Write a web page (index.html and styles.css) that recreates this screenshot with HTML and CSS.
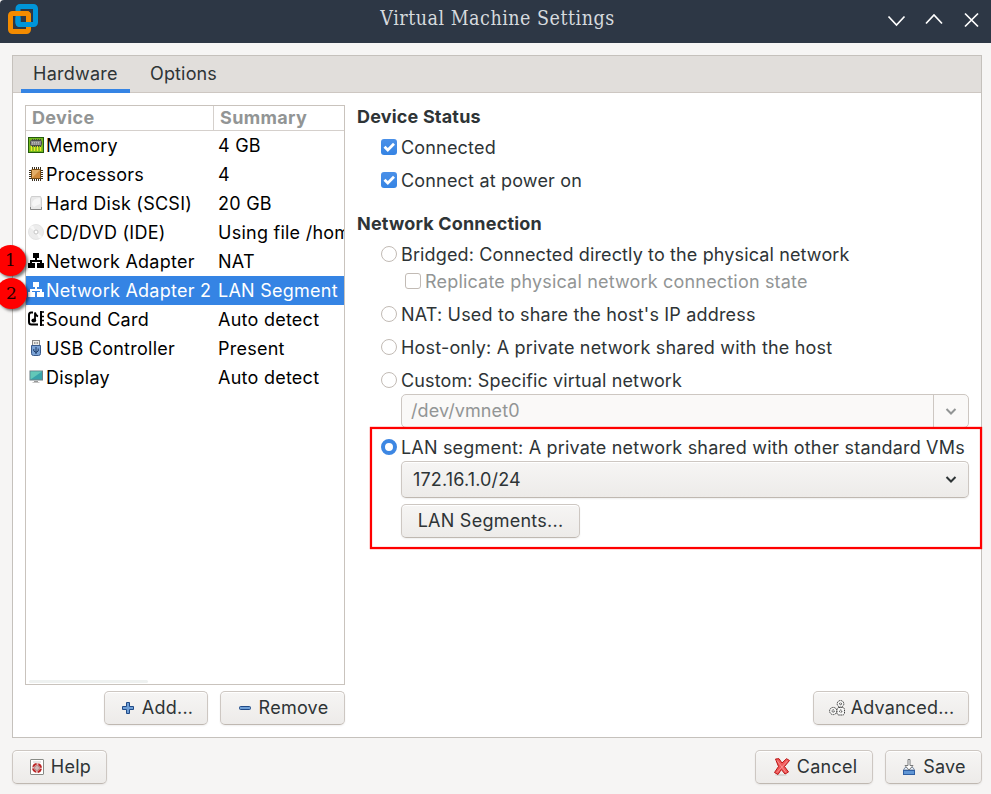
FILE: index.html
```html
<!DOCTYPE html>
<html lang="en">
<head>
<meta charset="utf-8">
<title>Virtual Machine Settings</title>
<link rel="stylesheet" href="styles.css">
</head>
<body>
<header class="titlebar">
  <svg class="logo" width="32" height="32" viewBox="0 0 32 32" fill="none" stroke-width="5">
    <rect x="10" y="2.500" width="17.500" height="18" rx="2" stroke="#0095d9"/>
    <rect x="2.500" y="9.500" width="18" height="18" rx="2" stroke="#f38b00"/>
    <path d="M10 13.500V18.500Q10 20.500 12 20.500H23" stroke="#0095d9"/>
    <path d="M14 9.500H18.500Q20.500 9.500 20.500 11.500V16" stroke="#f38b00"/>
  </svg>
  <h1 class="title">Virtual Machine Settings</h1>
  <svg class="controls" width="94" height="20" viewBox="0 0 94 20" fill="none" stroke="#fff" stroke-width="1.700">
    <path d="M1.500 6.500 9.500 15 17.500 6.500M39 13.500 47 5 55 13.500M78 3.500 91 16.500M91 3.500 78 16.500"/>
  </svg>
</header>
<main class="notebook">
  <nav class="tabs"><span class="tab active">Hardware</span><span class="tab">Options</span></nav>
  <div class="page">
    <section class="left">
      <div class="devices">
        <div class="row head"><span class="c1">Device</span><span class="c2">Summary</span></div>
        <div class="row"><span class="c1"><svg width="16" height="16"><rect x=".5" y=".5" width="15" height="15" fill="#72b81c" stroke="#245b0b"/><path d="M3.500 9V14M6.500 9V14M9.500 9V14M12.500 9V14" stroke="#f0e92b" stroke-width="1.500"/><path d="M4.500 2V10M6.500 2V10M8.500 2V10M10.500 2V10M12.500 2V10" stroke="#444"/><rect x="2.500" y="3.500" width="11" height="5" rx="1" fill="#8d8d8d" stroke="#4c4c4c"/><path d="M4 5.500H12M4 7H12" stroke="#bbb" stroke-dasharray="1 1"/></svg>Memory</span><span class="c2">4 GB</span></div>
        <div class="row"><span class="c1"><svg width="16" height="16"><path d="M4.500 1V15M6.500 1V15M8.500 1V15M10.500 1V15M12.500 1V15M1 4.500H15M1 6.500H15M1 8.500H15M1 10.500H15M1 12.500H15" stroke="#3a3020"/><rect x="3.500" y="3.500" width="9" height="9" rx="1" fill="#cf8a3b" stroke="#794c12"/><path d="M4 4H12L4 12Z" fill="#e2ad68"/></svg>Processors</span><span class="c2">4</span></div>
        <div class="row"><span class="c1"><svg width="16" height="16"><path d="M3.500 1.500H12.500L13.500 4V14.500H2.500V4Z" fill="#e9e9e9" stroke="#cfcfcf"/><path d="M4 10Q4 3 12 3V9Q9 10 6 12Z" fill="#f6f6f6"/><path d="M2.500 12V14.500H13.500V12" stroke="#8a8a8a" fill="none"/></svg>Hard Disk (SCSI)</span><span class="c2">20 GB</span></div>
        <div class="row"><span class="c1"><svg width="16" height="16"><circle cx="8" cy="8" r="7.500" fill="#ececec" stroke="#e4e4e4"/><path d="M8 8 2 3.500A7 7 0 0 1 5 1.500ZM8 8 14 12.500A7 7 0 0 1 11 14.500Z" fill="#f8f8f8"/><circle cx="8" cy="8" r="2" fill="#fff" stroke="#c6c6c6"/></svg>CD/DVD (IDE)</span><span class="c2">Using file /home/user</span></div>
        <div class="row"><span class="c1"><svg width="16" height="16" fill="currentColor"><path d="M5 0H11V5H9V7H14V10H16V15H9V10H12V9H4V10H7V15H0V10H2V7H7V5H5Z"/></svg>Network Adapter</span><span class="c2">NAT</span><b class="pin">1</b></div>
        <div class="row selected"><span class="c1"><svg width="16" height="16" fill="currentColor"><path d="M5 0H11V5H9V7H14V10H16V15H9V10H12V9H4V10H7V15H0V10H2V7H7V5H5Z"/></svg>Network Adapter 2</span><span class="c2">LAN Segment</span><b class="pin low">2</b></div>
        <div class="row"><span class="c1"><svg width="16" height="16" fill="none" stroke="#000"><path d="M5 1.500H3Q1 1.500 1 4V11Q1 13.500 3.500 13.500H10" stroke-width="2"/><path d="M7 9.500V1.500Q7.500 4.500 10 5.500" stroke-width="1.800"/><ellipse cx="5.800" cy="9.500" rx="2.400" ry="2" fill="#000" stroke="none"/><path d="M13 0V15" stroke-width="2"/><path d="M13 1H16M13 5.500H16M13 9.500H16M13 14H16" stroke-width="1.500"/></svg>Sound Card</span><span class="c2">Auto detect</span></div>
        <div class="row"><span class="c1"><svg width="16" height="16"><rect x="4.500" y=".5" width="7" height="5" fill="#eeeeea" stroke="#888"/><path d="M6 3H7.500M8.500 3H10" stroke="#555"/><path d="M3.500 5.500H12.500V13.500Q12.500 15.500 10.500 15.500H5.500Q3.500 15.500 3.500 13.500Z" fill="#7ba3d6" stroke="#38598a"/><path d="M8 7V14M5.800 9V11L8 12.500 10.200 11V8.500" fill="none" stroke="#1c3a66"/></svg>USB Controller</span><span class="c2">Present</span></div>
        <div class="row"><span class="c1"><svg width="16" height="16"><rect x="2" y="2" width="12.500" height="9" fill="#38a3aa" stroke="#6f7f84"/><path d="M2.500 2.500H14L2.500 10.500Z" fill="#62c7b8"/><path d="M6 12H10V13H6Z" fill="#999"/><path d="M4.500 13.500H11.500" stroke="#c4c4c4"/></svg>Display</span><span class="c2">Auto detect</span></div>
        <div class="scroll"></div>
      </div>
      <div class="actions">
        <span class="btn add"><svg width="16" height="16"><path d="M6.500 2.500H9.500V6.500H13.500V9.500H9.500V13.500H6.500V9.500H2.500V6.500H6.500Z" fill="#6f9fd6" stroke="#204a87"/></svg>Add...</span>
        <span class="btn remove"><svg width="16" height="16"><rect x="2.500" y="6.500" width="11" height="3" rx="1" fill="#6f9fd6" stroke="#204a87"/></svg>Remove</span>
      </div>
    </section>
    <section class="right">
      <h2 class="first">Device Status</h2>
      <div class="opt"><i class="check on"><svg width="16" height="16"><path d="M3.500 7.700 6.800 11 13 4.800" fill="none" stroke="#fff" stroke-width="2.800"/></svg></i>Connected</div>
      <div class="opt"><i class="check on"><svg width="16" height="16"><path d="M3.500 7.700 6.800 11 13 4.800" fill="none" stroke="#fff" stroke-width="2.800"/></svg></i>Connect at power on</div>
      <h2 class="second">Network Connection</h2>
      <div class="opt bridged"><i class="radio"></i>Bridged: Connected directly to the physical network</div>
      <div class="opt sub"><i class="check"></i>Replicate physical network connection state</div>
      <div class="opt"><i class="radio"></i>NAT: Used to share the host's IP address</div>
      <div class="opt"><i class="radio"></i>Host-only: A private network shared with the host</div>
      <div class="opt tight bridged"><i class="radio"></i>Custom: Specific virtual network</div>
      <div class="entry"><span>/dev/vmnet0</span><div class="drop"><svg width="12" height="8"><path d="M1.500 1 6 5.500 10.500 1" fill="none" stroke="#929595" stroke-width="2"/></svg></div></div>
      <div class="segment">
        <div class="opt tight"><i class="radio on"></i>LAN segment: A private network shared with other standard VMs</div>
        <div class="btn select"><span>172.16.1.0/24</span><svg width="12" height="8"><path d="M1.500 1 6 5.500 10.500 1" fill="none" stroke="#2e3436" stroke-width="2"/></svg></div>
        <span class="btn segs">LAN Segments...</span>
        <div class="outline"></div>
      </div>
      <span class="btn advanced"><svg width="17" height="16" fill="#f8f8f7" stroke="#444" stroke-dasharray="1.600 .6"><circle cx="11.500" cy="3.800" r="3.300"/><circle cx="11.500" cy="3.800" r="1"/><circle cx="4.200" cy="11" r="3.600"/><circle cx="4.200" cy="11" r="1.200"/><rect x="8" y="7.500" width="7.500" height="7.500" rx="2"/><circle cx="11.700" cy="11.200" r="1.200"/></svg>Advanced...</span>
    </section>
  </div>
</main>
<footer class="footer">
  <span class="btn help"><svg width="16" height="16"><rect x="1.500" y=".5" width="13" height="15" rx=".5" fill="#fff" stroke="#888a85"/><path d="M4 3H12" stroke="#ccc"/><circle cx="8" cy="9" r="3.900" fill="none" stroke="#e5b5b5" stroke-width="2"/><circle cx="8" cy="9" r="4" fill="none" stroke="#b92525" stroke-width="2" stroke-dasharray="4.280 2" stroke-dashoffset="-1"/><circle cx="8" cy="9" r="2.300" fill="#fff" stroke="#a85555" stroke-width=".9"/><path d="M8 6V12M5 9H11" stroke="#a98a8a" stroke-width=".7"/></svg>Help</span>
  <span class="btn cancel"><svg width="18" height="18"><ellipse cx="8" cy="17" rx="6" ry="1" fill="#d6d6d4"/><path d="M2.500 1 6 .7 9 5 13.500 .7 16.500 2.500 11.500 8.500 15.500 14 12 16 8.300 11.500 5 16.500 1.500 14.500 5.500 8.500Z" fill="#f05a5a" stroke="#ba1515" stroke-linejoin="round"/><path d="M4 2.500 13 14.500M14.500 2.800 4 14.500" stroke="#f79090"/></svg>Cancel</span>
  <span class="btn save"><svg width="16" height="16"><path d="M2.500 11 4 8.500H12L13.500 11Z" fill="#e7eef7" stroke="#8091a8"/><rect x="2.500" y="11.500" width="11" height="4" fill="#6096d5" stroke="#2f5fa3"/><path d="M7 .5H9V6.500H12L8 11 4 6.500H7Z" fill="#fff" stroke="#77797a"/></svg>Save</span>
</footer>
</body>
</html>
```
FILE: styles.css
```css
* { box-sizing: border-box; }
body {
  margin: 0; width: 991px; height: 794px; overflow: hidden;
  display: flex; flex-direction: column;
  background: #f6f5f4; color: #2e3436;
  font: 18px/24px Inter, "Liberation Sans", sans-serif;
  letter-spacing: .25px; white-space: nowrap;
}
svg { flex: none; display: block; }
.titlebar {
  height: 43px; background: #2d3745; color: #fff;
  display: grid; grid-template-columns: 1fr auto 1fr; align-items: center;
  padding: 0 10px 4px 8px; border-top-left-radius: 4px;
}
.logo { margin-top: 1px; }
.title { margin: -2px -3px 0 3px; font: 300 19.500px/24px "DejaVu Serif Condensed", "DejaVu Serif", serif; font-stretch: condensed; letter-spacing: .5px; color: #d6dade; }
.controls { justify-self: end; }
.notebook { margin: 12px 9px 0 12px; height: 683px; border: 1px solid #c5c1bc; background: #fff; }
.tabs { height: 37px; background: #e1dedb; border-bottom: 1px solid #cdc7c2; display: flex; padding-left: 8px; }
.tab { height: 37px; padding: 6px 12px 0; }
.tab + .tab { padding-left: 20px; letter-spacing: .15px; }
.active { width: 109px; border-bottom: 4px solid #3584e4; }
.page { display: flex; gap: 12px; padding: 12px; height: 644px; }
.left { width: 320px; flex: none; }
.devices { width: 320px; height: 580px; border: 1px solid #c9c3bd; display: flex; flex-direction: column; color: #000; }
.row { height: 29px; display: flex; align-items: center; position: relative; padding-left: 2px; }
.head { height: 25px; border-bottom: 1px solid #d5d0cc; font-weight: 700; color: #929595; padding: 0; letter-spacing: .35px; }
.c1 { width: 185px; display: flex; align-items: center; gap: 2px; flex: none; }
.c1 svg { margin-top: -1px; }
.head .c1 { width: 188px; padding-left: 6px; border-right: 1px solid #d5d0cc; height: 24px; }
.c2 { flex: 1; overflow: hidden; padding-left: 5px; }
.head .c2 { padding-left: 6px; }
.selected { background: #3584e4; color: #fff; }
.pin {
  position: absolute; left: -31px; top: -2px; width: 31px; height: 31px; border-radius: 50%;
  background: #f00; color: #200; box-shadow: 2px 2px 3px #0008;
  font: 17px/30px "DejaVu Serif", serif; text-align: center; letter-spacing: 0; z-index: 1;
}
.low { left: -30px; top: 2px; }
.scroll { width: 119px; height: 3px; border-radius: 2px; background: #eef1f0; margin: auto 0 1px 3px; }
.actions { display: flex; justify-content: flex-end; gap: 12px; margin-top: 6px; }
.btn {
  height: 34px; border: 1px solid #cdc7c2; border-bottom-color: #bfb8b1; border-radius: 5px;
  background: linear-gradient(#f6f5f4, #edebe9); box-shadow: inset 0 1px #fff, 0 1px 2px #00000012;
  display: flex; align-items: center; justify-content: center; gap: 6px;
}
.add { width: 104px; padding-left: 1px; } .remove { width: 125px; }
.right { flex: 1; min-width: 0; height: 620px; display: flex; flex-direction: column; }
h2 { margin: 0 0 1px; font-size: 18px; line-height: 25px; height: 25px; flex: none; letter-spacing: .18px; }
.first { line-height: 23px; }
.second { margin-top: 14px; margin-bottom: 2px; }
.opt { height: 33px; display: flex; align-items: center; gap: 4px; padding-left: 24px; flex: none; letter-spacing: .18px; }
.sub { height: 21px; margin-bottom: 6px; padding-left: 48px; color: #929595; }
.tight { height: 30px; padding-top: 3px; }
.bridged { letter-spacing: .13px; }
.check, .radio { width: 16px; height: 16px; border: 1px solid #c2bbb5; background: #fff; border-radius: 3px; flex: none; margin-top: -2px; }
.radio { border-radius: 50%; }
.check.on { border: 0; background: linear-gradient(#4a90e8, #3584e4); }
.radio.on { border: 4px solid #3d87e3; }
.entry { height: 34px; margin-left: 44px; border: 1px solid #cdc7c2; border-radius: 5px; background: #faf9f8; color: #929595; display: flex; justify-content: space-between; align-items: center; padding-left: 9px; letter-spacing: .1px; flex: none; }
.drop { width: 35px; height: 32px; border-left: 1px solid #cdc7c2; display: flex; align-items: center; justify-content: center; padding-top: 2px; }
.segment { position: relative; margin-top: 3px; }
.outline { position: absolute; left: 13px; top: -4px; width: 612px; height: 122px; border: 2px solid #f00; box-shadow: 0 0 1px #f00, inset 0 0 1px #f00; }
.select { height: 37px; margin-left: 44px; justify-content: space-between; padding: 0 11px; letter-spacing: .15px; }
.segs { width: 179px; margin: 6px 0 0 44px; }
.advanced { width: 156px; margin: auto 0 0 auto; gap: 5px; padding-left: 1px; letter-spacing: .18px; }
.footer { display: flex; gap: 12px; padding: 12px 9px 0 12px; }
.help { width: 95px; margin-right: auto; padding-left: 1px; } .cancel { width: 118px; padding-left: 2px; } .save { width: 97px; }
```
